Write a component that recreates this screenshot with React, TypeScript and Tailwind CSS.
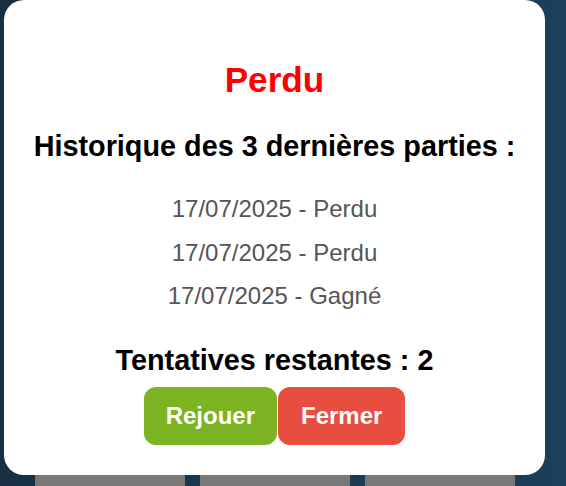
import React from "react";

export default function App() {
  const history = [
    "17/07/2025 - Perdu",
    "17/07/2025 - Perdu",
    "17/07/2025 - Gagné",
  ];
  return (
    <div
      className="relative w-[566px] h-[486px] overflow-hidden bg-[linear-gradient(90deg,#182f43_0%,#1b3a52_50%,#1c3f5a_100%)]"
      style={{ fontFamily: '"Liberation Sans", Arial, sans-serif' }}
    >
      <div className="flex gap-[15px] pl-[35px] pt-[475px]">
        <div className="w-[150px] h-[11px] bg-[#787878]" />
        <div className="w-[150px] h-[11px] bg-[#787878]" />
        <div className="w-[150px] h-[11px] bg-[#787878]" />
      </div>

      <div className="absolute left-[4px] top-0 w-[541px] h-[475px] rounded-[20px] bg-white flex flex-col items-center pt-[60px]">
        <h1 className="text-[35.2px] leading-[40px] font-bold text-[#ff0000]">Perdu</h1>
        <h2 className="mt-[30px] text-[28.8px] leading-[33px] font-bold text-black">
          Historique des 3 dernières parties :
        </h2>
        <div className="mt-[32px] flex flex-col gap-[15.5px]">
          {history.map((h, i) => (
            <p key={i} className="text-[24px] leading-[28px] text-[#555555] text-center">
              {h}
            </p>
          ))}
        </div>
        <p className="mt-[34px] text-[28.8px] leading-[33px] font-bold text-black">
          Tentatives restantes : 2
        </p>
        <div className="mt-[10px] flex gap-[1px]">
          <button className="h-[58px] px-[22px] rounded-[12px] bg-[#7cb322] text-white text-[24px] font-bold flex items-center">
            Rejouer
          </button>
          <button className="h-[58px] px-[23px] rounded-[12px] bg-[#e74e3f] text-white text-[24px] font-bold flex items-center">
            Fermer
          </button>
        </div>
      </div>
    </div>
  );
}
